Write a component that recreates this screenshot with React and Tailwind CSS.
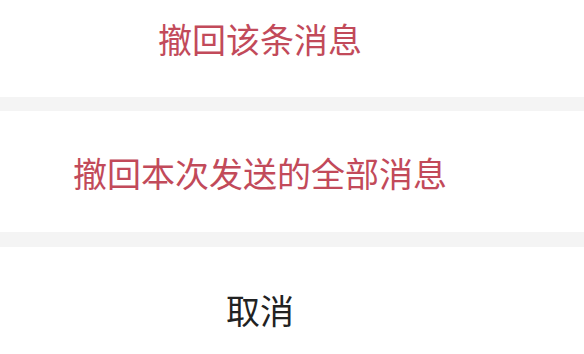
import React from 'react';

const actions = [
  { label: '撤回该条消息', height: 'h-[97px]', pad: 'pb-[20px]' },
  { label: '撤回本次发送的全部消息', height: 'h-[121px]', pad: 'pt-[2px]' },
];

export default function App() {
  return (
    <div
      className="w-[584px] h-[354px] bg-[#f4f4f4] flex flex-col overflow-hidden"
      style={{ fontFamily: '"Noto Sans CJK SC", "Noto Sans", sans-serif' }}
    >
      {/* recall options */}
      <div className="flex flex-col gap-[14px]">
        {actions.map((a) => (
          <button
            key={a.label}
            className={`${a.height} ${a.pad} bg-white w-full flex items-center justify-center pr-[64px] text-[34px] text-[#c24a5a]`}
          >
            {a.label}
          </button>
        ))}
      </div>

      {/* cancel */}
      <button className="mt-[15px] flex-1 bg-white w-full flex items-center justify-center pr-[64px] pt-[18px] text-[34px] text-[#222222]">
        取消
      </button>
    </div>
  );
}
